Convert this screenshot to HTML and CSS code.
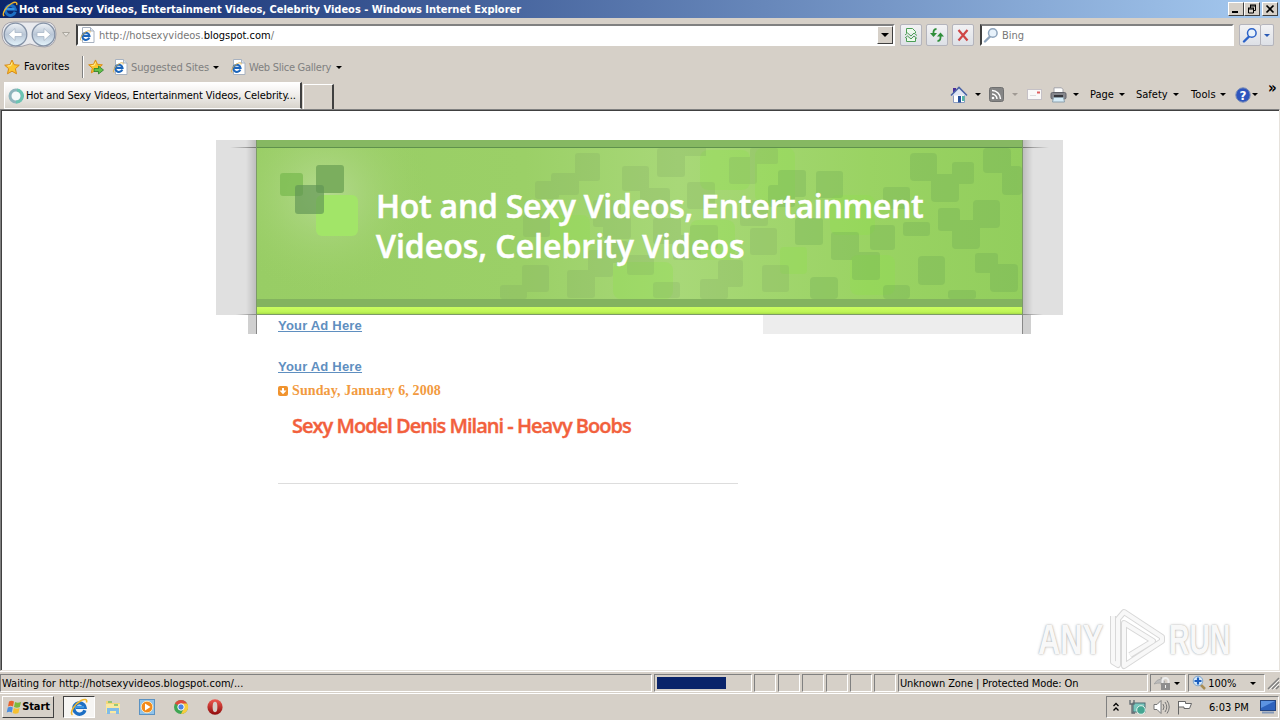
FILE: index.html
```html
<!DOCTYPE html>
<html lang="en">
<head>
  <meta charset="UTF-8" />
  <title>Hot and Sexy Videos, Entertainment Videos, Celebrity Videos</title>
  <link rel="stylesheet" href="styles.css">
</head>
<body>
  <!-- shared icons -->
  <svg class="defs" width="0" height="0">
    <defs>
      <linearGradient id="g-ball" x1="0" y1="0" x2="0" y2="1"><stop offset="0" stop-color="#eef2f6"/><stop offset=".5" stop-color="#b9c6d6"/><stop offset="1" stop-color="#e4f4fc"/></linearGradient>
      <linearGradient id="g-red" x1="0" y1="0" x2="0" y2="1"><stop offset="0" stop-color="#ef5a50"/><stop offset="1" stop-color="#8e0a0a"/></linearGradient>
      <symbol id="ie" viewBox="0 0 16 16">
        <path d="M13.2 10.8A5 5 0 1 1 13.3 8.300H5.2" fill="none" stroke="#1d6fc4" stroke-width="3"/>
        <path d="M4 8h8.500" stroke="#3e9be8" stroke-width="1.600"/>
        <path d="M2.200 15C-.6 13 4 5.500 9.500 2.500 13 .6 15.700.9 14.600 4" fill="none" stroke="#efb52c" stroke-width="1.400"/>
      </symbol>
      <symbol id="page-ie" viewBox="0 0 16 16">
        <path d="M3.500.5h8l3.500 3.500v11.500H3.500z" fill="#fff" stroke="#a8b2c0"/>
        <path d="M11.500.5v3.500H15" fill="#dde5ee" stroke="#a8b2c0"/>
        <path d="M10.300 10.600A3.600 3.600 0 1 1 10.500 8.900H4.500" fill="none" stroke="#1d66bb" stroke-width="2.100"/>
        <path d="M2 13.500C0 12 3.500 6.500 7.500 4.500c2.500-1.300 4.200-1 3.500 1" fill="none" stroke="#dfb04a"/>
      </symbol>
      <symbol id="star" viewBox="0 0 16 16">
        <path d="M8 1l2.100 4.700 5.200.5-3.900 3.500 1.100 5.100L8 12.200l-4.500 2.600 1.100-5.100L.7 6.200l5.200-.5z" fill="#fcc630" stroke="#d98a14"/>
        <path d="M8 3.500L6.800 6.600l-3.200.4" fill="none" stroke="#fff0a0"/>
      </symbol>
      <symbol id="glass" viewBox="0 0 16 16">
        <path d="M7 9.500L2 14.500" stroke="currentColor" stroke-width="2.400" stroke-linecap="round"/>
        <circle cx="9.800" cy="6" r="4.300" fill="#e8f2fb" stroke="currentColor" stroke-width="1.500"/>
      </symbol>
    </defs>
  </svg>

  <header class="titlebar">
    <svg class="ic16"><use href="#ie"/></svg>
    <span class="caption">Hot and Sexy Videos, Entertainment Videos, Celebrity Videos - Windows Internet Explorer</span>
    <div class="winbtns">
      <button><svg viewBox="0 0 14 12"><path d="M3 9h6" stroke="#000" stroke-width="2"/></svg></button>
      <button><svg viewBox="0 0 14 12"><path d="M5 2h6M5 3h6M3 5h6M3 6h6" stroke="#000"/><path d="M5.500 2v3M10.500 2v5.500H9M3.500 5v5h5V5" fill="none" stroke="#000"/></svg></button>
      <button class="close"><svg viewBox="0 0 14 12"><path d="M3.500 2.500l7 7M10.500 2.500l-7 7" stroke="#000" stroke-width="1.700"/></svg></button>
    </div>
  </header>

  <div class="navrow">
    <svg class="travel" viewBox="0 0 74 30">
      <path d="M14 2h32q10 0 10 12t-11 13q-8 0-15-3-8 3-16 3Q2 26 2 14T14 2z" fill="#e9eaee" stroke="#a5a3aa"/>
      <circle cx="15.500" cy="14.500" r="11.300" fill="url(#g-ball)" stroke="#8492a6" stroke-width="1.300"/>
      <circle cx="43.500" cy="14.500" r="11.300" fill="url(#g-ball)" stroke="#8492a6" stroke-width="1.300"/>
      <path d="M8.500 14.500l6.500-6v4h7v4h-7v4z" fill="#fff" stroke="#aab7c8" stroke-width=".8"/>
      <path d="M50.500 14.500l-6.500-6v4h-7v4h7v4z" fill="#fff" stroke="#aab7c8" stroke-width=".8"/>
      <path d="M62.500 12.500h7l-3.500 4z" fill="#e8e5e0" stroke="#aaa69e"/>
    </svg>
    <div class="address">
      <svg class="ic16"><use href="#page-ie"/></svg>
      <span class="url">http://hotsexyvideos.<b>blogspot.com</b>/</span>
      <button class="drop"><i class="arr big"></i></button>
    </div>
    <div class="navbtns">
      <button><svg viewBox="0 0 16 16"><path d="M3.500 6V1.500h6l3 3V6M3.500 11v3.500h9V11" fill="#eefaee" stroke="#4b9e55"/><path d="M2 8l2.500-2L8 9l3-3 3 2.500M2 11l2.500-2L8 12l3-3 3 2.500" fill="none" stroke="#4b9e55"/></svg></button>
      <button><svg viewBox="0 0 16 16"><path d="M7.500 2Q4 2 4.500 7" fill="none" stroke="#2f8e3a" stroke-width="1.800"/><path d="M1 6h7L4.500 10z" fill="#2f8e3a"/><path d="M8.500 14Q12 14 11.500 9" fill="none" stroke="#2f8e3a" stroke-width="1.800"/><path d="M8 9.500h7L11.500 5.500z" fill="#2f8e3a"/></svg></button>
      <button><svg viewBox="0 0 16 16"><path d="M3.500 3l9 10.500M12.500 3l-9 10.500" stroke="#cf4545" stroke-width="2.200"/></svg></button>
    </div>
    <div class="search">
      <svg class="ic16"><use href="#glass"/></svg>
      <span>Bing</span>
    </div>
    <div class="go">
      <button><svg class="ic16"><use href="#glass"/></svg></button>
      <button class="more"><i class="arr blue"></i></button>
    </div>
  </div>

  <div class="favrow">
    <svg class="ic16"><use href="#star"/></svg>
    <span class="favs">Favorites</span>
    <span class="sep"></span>
    <svg class="ic16 add" viewBox="0 0 16 16"><use href="#star" width="15" height="15"/><path d="M6 9.500h4.500V7l5 4-5 4v-2.500H6z" fill="#62c04a" stroke="#2a7f2a" stroke-width=".8"/></svg>
    <svg class="ic16 sug"><use href="#page-ie"/></svg>
    <span class="dim suggested">Suggested Sites</span><i class="arr"></i>
    <svg class="ic16 web"><use href="#page-ie"/></svg>
    <span class="dim slice">Web Slice Gallery</span><i class="arr"></i>
  </div>

  <div class="tabrow">
    <div class="tab">
      <svg class="ic16" viewBox="0 0 16 16"><circle cx="8" cy="8" r="6" fill="#f5fafa" stroke="#8fb4bc" stroke-width="3"/><path d="M9 2A6 6 0 0 1 8 14" fill="none" stroke="#6cc4b2" stroke-width="3"/></svg>
      <span>Hot and Sexy Videos, Entertainment Videos, Celebrity...</span>
    </div>
    <div class="newtab"></div>
    <div class="cmdbar">
      <svg class="ic18" viewBox="0 0 18 18"><path d="M3.500 8.500v8h11v-8" fill="#fff" stroke="#8a9bc0"/><path d="M3 2h3v5H3z" fill="#4a2f9a"/><path d="M1 9.500l8-8 8 8" fill="#dfe6f3" stroke="#4a63a6" stroke-width="1.600"/><path d="M8 10h3v6.500H8z" fill="#27519c"/><path d="M12 10h2.500v5H12z" fill="#51b5a5"/></svg>
      <i class="arr a1"></i>
      <svg class="rss" viewBox="0 0 15 15"><rect x=".5" y=".5" width="14" height="14" rx="2" fill="#858585" stroke="#707070"/><circle cx="4" cy="11" r="1.300" fill="#fff"/><path d="M3 7a5 5 0 0 1 5 5M3 3.500A8.500 8.500 0 0 1 11.500 12" fill="none" stroke="#fff" stroke-width="1.500"/></svg>
      <i class="arr pale a2"></i>
      <svg class="mail" viewBox="0 0 15 11"><rect x=".5" y=".5" width="14" height="10" fill="#faf9f8" stroke="#c5c1c6"/><path d="M10 2.500h3v2h-3z" fill="#e06060"/><path d="M3 6.500h6" stroke="#ddd"/></svg>
      <svg class="print" viewBox="0 0 17 16"><path d="M4 6V.8h7.500L13 2.500V6" fill="#fff" stroke="#a2a2a8"/><rect x="1" y="5.500" width="15" height="6.500" rx="1.500" fill="#85868c" stroke="#606168"/><path d="M4 8h9v2H4z" fill="#35363b"/><path d="M3.500 10.500h10l1 4.500h-12z" fill="#d5ecf8" stroke="#8ca0ac"/></svg>
      <i class="arr a3"></i>
      <span class="m1">Page</span><i class="arr"></i>
      <span class="m2">Safety</span><i class="arr"></i>
      <span class="m3">Tools</span><i class="arr"></i>
      <svg class="ic16 help" viewBox="0 0 16 16"><circle cx="8" cy="8" r="7.200" fill="#2e55bd" stroke="#7b8eb9"/><text x="8" y="12.500" text-anchor="middle">?</text></svg><i class="arr nogap"></i>
      <span class="chev">»</span>
    </div>
  </div>

  <main class="viewport">
    <div class="blog">
      <div class="head">
        <div class="wing left"></div>
        <div class="banner">
          <svg class="art" viewBox="257 148 765 151" preserveAspectRatio="none">
            <defs>
              <radialGradient id="glow"><stop offset="0" stop-color="#b5da90"/><stop offset="1" stop-color="#9ccf66" stop-opacity="0"/></radialGradient>
              <linearGradient id="wash"><stop offset="0" stop-color="#98cd65"/><stop offset=".35" stop-color="#9bd067"/><stop offset=".55" stop-color="#a8d878"/><stop offset=".8" stop-color="#9ad363"/><stop offset="1" stop-color="#92ce5d"/></linearGradient>
            </defs>
            <rect x="257" y="148" width="765" height="151" fill="url(#wash)"/>
            <ellipse cx="325" cy="194" rx="105" ry="100" fill="url(#glow)"/>
            <g fill="#8fe24c" opacity=".3">
              <rect x="700" y="150" width="50" height="40" rx="8"/><rect x="755" y="148" width="40" height="55" rx="8"/>
              <rect x="613" y="262" width="60" height="37" rx="8"/><rect x="690" y="220" width="45" height="40" rx="8"/>
              <rect x="830" y="195" width="45" height="40" rx="8"/><rect x="850" y="255" width="45" height="40" rx="8"/>
              <rect x="780" y="247" width="27" height="27" rx="4"/><rect x="550" y="215" width="40" height="35" rx="8"/>
            </g>
            <!-- left side fades out, right side is stronger -->
            <g fill="#7a9f62" opacity=".2">
              <rect x="575" y="153" width="25" height="28" rx="3"/><rect x="551" y="173" width="28" height="22" rx="3"/>
              <rect x="622" y="166" width="27" height="25" rx="3"/><rect x="657" y="148" width="28" height="29" rx="3"/>
              <rect x="687" y="182" width="28" height="27" rx="3"/><rect x="729" y="157" width="28" height="27" rx="3"/>
              <rect x="750" y="148" width="28" height="16" rx="2"/><rect x="680" y="148" width="26" height="8"/>
              <rect x="523" y="215" width="27" height="22" rx="3"/><rect x="593" y="200" width="28" height="27" rx="3"/>
              <rect x="653" y="218" width="28" height="26" rx="3"/><rect x="588" y="250" width="25" height="27" rx="3"/>
              <rect x="567" y="270" width="28" height="28" rx="3"/><rect x="522" y="265" width="27" height="27" rx="3"/>
              <rect x="500" y="285" width="27" height="14" rx="3"/><rect x="627" y="255" width="27" height="20" rx="3"/>
              <rect x="653" y="282" width="27" height="16" rx="3"/><rect x="673" y="235" width="28" height="25" rx="3"/>
              <rect x="718" y="260" width="25" height="27" rx="3"/><rect x="700" y="279" width="28" height="20" rx="3"/>
              <rect x="762" y="265" width="27" height="27" rx="3"/><rect x="750" y="228" width="27" height="27" rx="3"/>
              <rect x="535" y="181" width="24" height="18" rx="3"/><rect x="603" y="215" width="28" height="24" rx="3"/>
              <rect x="640" y="188" width="30" height="26" rx="3"/><rect x="740" y="200" width="28" height="26" rx="3"/>
              <rect x="690" y="225" width="28" height="24" rx="3"/><rect x="602" y="241" width="26" height="22" rx="3"/>
            </g>
            <g fill="#649f52" opacity=".24">
              <rect x="778" y="170" width="28" height="27" rx="3"/><rect x="816" y="171" width="27" height="27" rx="3"/>
              <rect x="768" y="185" width="27" height="22" rx="3"/><rect x="795" y="218" width="28" height="27" rx="3"/>
              <rect x="831" y="232" width="28" height="28" rx="3"/><rect x="852" y="252" width="28" height="28" rx="3"/>
              <rect x="870" y="225" width="25" height="25" rx="3"/><rect x="903" y="222" width="27" height="14" rx="3"/>
              <rect x="883" y="187" width="27" height="22" rx="3"/><rect x="910" y="153" width="27" height="28" rx="4"/>
              <rect x="931" y="174" width="28" height="28" rx="4"/><rect x="952" y="162" width="22" height="22" rx="3"/>
              <rect x="983" y="148" width="28" height="25" rx="4"/><rect x="1002" y="166" width="20" height="29" rx="4"/>
              <rect x="973" y="200" width="27" height="28" rx="4"/><rect x="938" y="208" width="22" height="23" rx="3"/>
              <rect x="952" y="220" width="28" height="29" rx="4"/><rect x="918" y="256" width="27" height="29" rx="4"/>
              <rect x="975" y="253" width="23" height="20" rx="3"/><rect x="990" y="264" width="28" height="28" rx="4"/>
              <rect x="948" y="290" width="28" height="9" rx="3"/><rect x="883" y="285" width="27" height="14" rx="4"/>
              <rect x="810" y="277" width="28" height="22" rx="4"/>
            </g>
            <rect x="316" y="195" width="42" height="41" rx="6" fill="#a2e568"/>
            <rect x="280" y="173" width="23" height="23" rx="3" fill="#7fbd55" opacity=".85"/>
            <rect x="316" y="165" width="28" height="28" rx="3" fill="#7bae5e"/>
            <rect x="295" y="185" width="29" height="29" rx="3" fill="#5f9354" opacity=".65"/>
          </svg>
          <h1><span>Hot and Sexy Videos, Entertainment</span><br>Videos, Celebrity Videos</h1>
        </div>
        <div class="wing right"></div>
      </div>
      <div class="body">
        <div class="posts">
          <a href="#">Your Ad Here</a>
          <a href="#" class="second">Your Ad Here</a>
          <h2><svg viewBox="0 0 10 10"><rect width="10" height="10" rx="2" fill="#f0932e"/><path d="M4 2h2v2.500h2.500L5 8.300 1.500 4.500H4z" fill="#fff"/></svg>Sunday, January 6, 2008</h2>
          <h3>Sexy Model Denis Milani - Heavy Boobs</h3>
          <hr>
        </div>
        <div class="sidebar"></div>
      </div>
    </div>
    <div class="watermark">
      <span class="any">ANY</span>
      <svg viewBox="0 0 60 64"><path d="M6 9v46l5 3V12l6-7 38 25v4L17 59V16l29 18-23 14" fill="none" stroke="#d8d8d8" stroke-width="6" stroke-linejoin="round"/><path d="M6 9v46l5 3V12l6-7 38 25v4L17 59V16l29 18-23 14" fill="none" stroke="#f8f8f8" stroke-width="4" stroke-linejoin="round"/></svg>
      <span class="run">RUN</span>
    </div>
  </main>

  <div class="status">
    <div class="pane msg"><span>Waiting for http://hotsexyvideos.blogspot.com/...</span></div>
    <div class="pane progress"><div></div></div>
    <div class="pane slot"></div><div class="pane slot"></div><div class="pane slot"></div>
    <div class="pane slot"></div><div class="pane slot"></div><div class="pane slot"></div>
    <div class="pane zone"><span>Unknown Zone | Protected Mode: On</span></div>
    <div class="pane lock">
      <svg viewBox="0 0 20 16"><path d="M1 9q3-5 7-5v-2l4 5-4 3V8Q4 8 1 9z" fill="#bbb" stroke="#999" stroke-width=".6"/><path d="M9.500 8V6a3 3 0 0 1 6 0v2" fill="none" stroke="#eee" stroke-width="2"/><rect x="8" y="8" width="9" height="7" fill="#8e8e8e"/><path d="M12.500 10v3" stroke="#eee"/></svg>
      <i class="arr"></i>
    </div>
    <div class="pane zoom">
      <svg viewBox="0 0 16 16"><path d="M8 9l5 5" stroke="#a88d56" stroke-width="2.500"/><circle cx="6" cy="6" r="4.800" fill="#d8ebfa" stroke="#7ea4cc"/><path d="M6 2.500v7M2.500 6h7" stroke="#1d5fc0" stroke-width="2.200"/></svg>
      <span>100%</span><i class="arr"></i>
    </div>
    <svg class="grip" viewBox="0 0 14 14"><path d="M2 13L13 2M6 13l7-7M10 13l3-3" stroke="#808080" stroke-width="1.500"/><path d="M3.500 13.500l10-10M7.500 13.500l6-6" stroke="#fff" stroke-width=".8"/></svg>
  </div>

  <footer class="taskbar">
    <button class="start">
      <svg viewBox="0 0 16 16"><path d="M3 2.500Q5.500 1 8 2.500L7 7.500Q4.500 6 2 7.500z" fill="#e8622c"/><path d="M9 3q2.500 1.500 6 0l-1.200 5Q11 9.300 8 8z" fill="#7db93c"/><path d="M1.800 8.500Q4.500 7 6.800 8.500l-1 5Q3.500 12 .7 13.500z" fill="#4b8ede"/><path d="M7.800 9q3 1.500 5.800 0l-1.200 5Q9.500 15.500 6.700 14z" fill="#f6c030"/></svg>
      <span>Start</span>
    </button>
    <div class="task active"><svg viewBox="0 0 16 16"><use href="#ie"/></svg></div>
    <div class="task"><svg viewBox="0 0 18 18"><path d="M2 3h5l1 2h8v4H2z" fill="#f4d67a"/><path d="M2 6h14v9H2z" fill="#f9e9a0"/><path d="M4 4h4M10 7h4" stroke="#76bd6c" stroke-width="1.500"/><path d="M3 16V10h12v6h-3v-3H6v3z" fill="#80bce8"/></svg></div>
    <div class="task"><svg viewBox="0 0 18 18"><rect x="1.500" y="1.500" width="15" height="15" fill="#90c3ea" stroke="#5b92c2"/><circle cx="9" cy="9" r="5.800" fill="#f28a1a" stroke="#fde3b6"/><path d="M7 5.500L12.500 9 7 12.500z" fill="#fff"/></svg></div>
    <div class="task"><svg viewBox="0 0 18 18"><circle cx="9" cy="9" r="7" fill="#3fa653"/><path d="M9 9L2.900 5.500A7 7 0 0 1 15.100 5.500z" fill="#dd4b3d"/><path d="M9 5.500h6.200A7 7 0 0 1 9 16l3-6z" fill="#f8cd3e"/><circle cx="9" cy="9" r="3.200" fill="#4a84e4" stroke="#fff"/></svg></div>
    <div class="task"><svg viewBox="0 0 18 18"><ellipse cx="9" cy="9" rx="7.600" ry="7.800" fill="url(#g-red)"/><ellipse cx="9" cy="9" rx="2.400" ry="5.200" fill="#d6cfc8"/></svg></div>
    <div class="tray">
      <svg class="up" viewBox="0 0 8 10"><path d="M1.500 4L4 1.500 6.500 4M1.500 8.500L4 6l2.500 2.500" fill="none" stroke="#000" stroke-width="1.300"/></svg>
      <svg class="net" viewBox="0 0 18 16"><rect x="4" y="4" width="12" height="9" fill="#79c7bd" stroke="#4b6a72"/><path d="M1 1v4h4V1M3 5v9h3" fill="none" stroke="#606a70" stroke-width="1.300"/><circle cx="12" cy="11" r="4.300" fill="#45a692" stroke="#e2f0ea"/></svg>
      <svg class="vol" viewBox="0 0 17 16"><path d="M1 5.500h3L8 1.500v13l-4-4H1z" fill="#fff" stroke="#777"/><path d="M10 5q2 3 0 6M12 3q3.500 5 0 10M14 1.500q4.500 6.500 0 13" fill="none" stroke="#777"/></svg>
      <svg class="flag" viewBox="0 0 17 16"><path d="M2.500 15.500V2M2.500 2.500h7v2h6l-2 5H8v-1.500H2.500" fill="#fff" stroke="#666"/></svg>
      <span class="clock">6:03 PM</span>
      <svg class="desk" viewBox="0 0 16 14"><rect x=".5" y=".5" width="15" height="10" fill="#2d62bd" stroke="#244580"/><path d="M1 1h14L1 8z" fill="#5c93e2"/><path d="M2 12.500h12" stroke="#8398b8" stroke-width="2"/></svg>
    </div>
  </footer>
</body>
</html>
```
FILE: styles.css
```css
:root {
  --face: #d6d0c8;
  --shadow: #808080;
  --dark: #404040;
}
* { box-sizing: border-box; }
html, body { height: 100%; }
body {
  margin: 0;
  display: flex;
  flex-direction: column;
  overflow: hidden;
  background: var(--face);
  color: #000;
  font: 11px/14px "DejaVu Sans Condensed", "DejaVu Sans", sans-serif;
  font-stretch: condensed;
  white-space: nowrap;
}
svg { display: block; flex: none; }
span { flex: none; }
button { font: inherit; color: inherit; padding: 0; margin: 0; border: 0; display: flex; align-items: center; justify-content: center; }
.defs { position: absolute; }
.ic16 { width: 16px; height: 16px; }
.ic18 { width: 18px; height: 18px; }
.arr {
  flex: none;
  width: 0; height: 0;
  border: 3px solid transparent;
  border-top-color: #000;
  border-bottom: 0;
  margin-left: 5px;
}
.arr.big { border-width: 4px 4px 0; margin: 0; }
.arr.blue { border-top-color: #2a5ab5; margin: 0; }
.arr.pale { border-top-color: #a09a94; }
.arr.nogap { margin-left: 1px; }

/* title bar */
.titlebar {
  height: 18px;
  flex: none;
  display: flex;
  align-items: center;
  padding-left: 2px;
  background: linear-gradient(90deg, #0a246a, #a6caf0);
}
.caption { color: #fff; font-weight: bold; margin-left: 1px; padding-top: 1px; letter-spacing: -.01px; }
.winbtns { display: flex; margin-left: auto; padding-right: 2px; }
.winbtns button {
  width: 16px; height: 14px;
  background: var(--face);
  border: 1px solid;
  border-color: #fff var(--dark) var(--dark) #fff;
}
.winbtns svg { width: 14px; height: 12px; }
.winbtns .close { margin-left: 2px; }

/* address row */
.navrow { height: 34px; flex: none; display: flex; align-items: flex-start; padding-top: 2px; }
.travel { width: 74px; height: 30px; }
.address {
  display: flex;
  align-items: center;
  width: 819px; height: 22px;
  margin: 4px 0 0 2px;
  padding-left: 1px;
  background: #fff;
  border: 2px solid;
  border-color: var(--shadow) #fff #fff var(--dark);
}
.url { margin-left: 4px; padding-top: 2px; color: #777; }
.url b { color: #000; font-weight: normal; }
.drop {
  width: 16px; height: 18px;
  margin-left: auto;
  background: var(--face);
  border: 1px solid;
  border-color: #fff var(--dark) var(--dark) #fff;
}
.navbtns { display: flex; gap: 4px; margin: 4px 0 0 5px; }
.navbtns button, .go button {
  width: 22px; height: 22px;
  background: linear-gradient(#f2f2f4, #dde0e6);
  border: 1px solid #b4b4bc;
  border-radius: 2px;
}
.navbtns svg { width: 16px; height: 16px; }
.search {
  display: flex;
  align-items: center;
  width: 254px; height: 22px;
  margin: 4px 0 0 6px;
  padding-left: 1px;
  color: #777;
  background: #fff;
  border: 2px solid;
  border-color: var(--shadow) #fff #fff var(--dark);
}
.search .ic16 { color: #8fa5bd; }
.search span { margin-left: 3px; padding-top: 2px; }
.go { display: flex; margin: 4px 0 0 5px; color: #2b62c8; }
.go button.more { width: 13px; border-left: 0; }

/* favorites bar */
.favrow { height: 30px; flex: none; display: flex; align-items: center; padding-left: 4px; }
.favs { margin-left: 4px; width: 46px; letter-spacing: .1px; }
.sep { width: 2px; height: 22px; margin: 0 4px 0 12px; border-left: 1px solid var(--shadow); border-right: 1px solid #fff; }
.sug { margin-left: 8px; }
.web { margin-left: 11px; }
.dim { color: #808080; padding-top: 1px; }
.suggested { width: 78px; margin-left: 3px; letter-spacing: -.12px; }
.slice { width: 82px; margin-left: 3px; letter-spacing: -.25px; }
.favrow .slice + .arr { margin-left: 5px; }
.favrow .suggested + .arr { margin-left: 4px; }

/* tabs + command bar */
.tabrow { height: 27px; flex: none; display: flex; align-items: flex-end; padding-left: 4px; }
.tab {
  display: flex;
  align-items: center;
  width: 298px; height: 27px;
  padding-left: 3px;
  background: linear-gradient(#fff, #f2f0ee 40%, #d8d4cc);
  border: 1px solid #fff;
  border-right: 2px solid var(--dark);
}
.tab span { margin-left: 2px; padding-top: 1px; letter-spacing: -.09px; }
.newtab { width: 31px; height: 25px; margin-left: 1px; border: 1px solid #fff; border-right: 2px solid var(--dark); border-bottom: 0; }
.cmdbar { display: flex; align-items: center; height: 27px; margin-left: 616px; padding-bottom: 2px; }
.rss { width: 15px; height: 15px; margin-left: 8px; }
.a2.arr { margin-left: 8px; }
.mail { width: 15px; height: 11px; margin-left: 9px; }
.print { width: 17px; height: 16px; margin-left: 8px; }
.a1.arr { margin-left: 7px; }
.a3.arr { margin-left: 6px; }
.m1 { margin-left: 11px; width: 24px; }
.m2 { margin-left: 11px; width: 32px; }
.m3 { margin-left: 12px; width: 25px; letter-spacing: .1px; }
.m3 + .arr { margin-left: 4px; }
.help { margin-left: 9px; }
.help text { fill: #fff; font: bold 12px "DejaVu Sans", sans-serif; }
.chev { margin: -14px 0 0 10px; font-size: 15px; font-weight: bold; }

/* page */
.viewport {
  position: relative;
  flex: 1;
  min-height: 0;
  background: #fff;
  border: 1px solid;
  border-color: var(--shadow) #e6e2dc #e6e2dc var(--shadow);
  box-shadow: inset 1px 1px var(--dark);
}
.blog { width: 847px; margin: 30px 0 0 215px; }
.head { display: flex; height: 175px; }
.wing { width: 40px; background: linear-gradient(90deg, transparent 75%, #bdbdbd), #e0e0e0; padding-top: 7px; }
.wing.right { background: linear-gradient(270deg, transparent 75%, #bdbdbd), #e0e0e0; margin-left: auto; }
.wing::before { content: ""; display: block; height: 1px; margin-left: 14px; background: linear-gradient(90deg, transparent, #777); }
.wing.right::before { margin: 0 14px 0 0; background: linear-gradient(270deg, transparent, #777); }
.wing::after { content: ""; display: block; height: 1px; margin: 166px 0 0 20px; background: linear-gradient(90deg, transparent, #888); }
.wing.right::after { margin: 166px 20px 0 0; background: linear-gradient(270deg, transparent, #888); }
.banner {
  position: relative;
  width: 767px;
  border: 1px solid #7c9a68;
  border-width: 0 1px 1px;
  background: linear-gradient(#86b862 0 7px, #5f914c 7px 8px, transparent 8px 159px, #83b35f 159px 167px, #c9fb5e 167px 168px, #bdf455 172px, #a7dc46 174px);
}
.art { position: absolute; left: 0; top: 8px; width: 765px; height: 151px; }
h1 {
  position: relative;
  margin: 46px 0 0 119px;
  color: #fff;
  font: 600 32px/40px "Open Sans", sans-serif;
  -webkit-text-stroke: .5px #fff;
}
h1 span { letter-spacing: -.24px; }
.body { display: flex; width: 783px; height: 19px; margin-left: 32px; border: solid #d0d0d0; border-width: 0 8px; }
.posts { width: 506px; flex: none; padding: 3px 0 0 21px; border-left: 1px solid #888; height: 19px; }
.posts a { display: block; width: 84px; color: #5f8fc0; font: bold 13px/15px "Liberation Sans", sans-serif; letter-spacing: .2px; }
.posts .second { margin-top: 26px; }
h2 { display: flex; align-items: center; margin: 8px 0 0; color: #f29a40; font: bold 14px/17px "Liberation Serif", serif; letter-spacing: .1px; }
h2 svg { width: 10px; height: 10px; margin-right: 4px; }
h3 { margin: 13px 0 0 14px; color: #f2603c; font: 600 20px/28px "Open Sans", sans-serif; letter-spacing: -.98px; -webkit-text-stroke: .4px #f2603c; }
hr { width: 460px; margin: 43px 0 0; border: 0; border-top: 1px solid #ddd; }
.sidebar { flex: 1; margin-left: 1px; background: #ededed; border-right: 1px solid #888; }
.watermark { position: absolute; right: 48px; bottom: -1px; display: flex; align-items: center; color: #f8f8f8; text-shadow: 0 0 3px #aaa, 0 0 1px #ccc; }
.watermark svg { width: 60px; height: 64px; margin: 0 2px 0 4px; }
.watermark span { font: bold 43px/50px "Liberation Sans", sans-serif; transform-origin: left; }
.any { width: 65px; transform: scaleX(.72); }
.run { width: 62px; transform: scaleX(.66); }

/* status bar */
.status { height: 22px; flex: none; display: flex; align-items: center; border-top: 1px solid #fff; padding-top: 1px; }
.pane {
  display: flex;
  align-items: center;
  height: 18px;
  margin-right: 2px;
  border: 1px solid;
  border-color: var(--shadow) #fff #fff var(--shadow);
}
.pane span { padding-top: 1px; }
.msg { width: 654px; }
.msg span { padding-left: 1px; }
.progress { width: 98px; padding-left: 2px; }
.progress div { width: 69px; height: 12px; background: #0a246a; }
.slot { width: 22px; }
.zone { width: 251px; padding-left: 1px; letter-spacing: -.1px; }
.lock { width: 36px; padding-left: 2px; }
.lock svg { width: 20px; height: 16px; }
.lock .arr { margin-left: 1px; }
.zoom { width: 77px; padding-left: 3px; }
.zoom svg { width: 16px; height: 16px; }
.zoom .arr { margin-left: 14px; }
.grip { width: 14px; height: 14px; margin-left: -1px; }

/* taskbar */
.taskbar { height: 27px; flex: none; display: flex; align-items: center; border-top: 1px solid #fff; padding-left: 2px; }
.start {
  width: 52px; height: 22px;
  background: var(--face);
  border: 1px solid;
  border-color: #fff var(--dark) var(--dark) #fff;
  font-weight: bold;
  letter-spacing: -.1px;
}
.start svg { width: 16px; height: 16px; }
.task { width: 34px; height: 22px; display: flex; align-items: center; justify-content: center; }
.task svg { width: 18px; height: 18px; }
.task.active { width: 32px; margin: 0 1px 0 9px; background: #f6f5f3; border: 1px solid; border-color: var(--dark) #fff #fff var(--dark); }
.tray {
  display: flex;
  align-items: center;
  width: 173px; height: 22px;
  margin: 0 1px 0 auto;
  padding-left: 5px;
  border: 1px solid;
  border-color: var(--shadow) #fff #fff var(--shadow);
}
.up { width: 8px; height: 10px; }
.net { width: 18px; height: 16px; margin-left: 9px; }
.vol { width: 17px; height: 16px; margin-left: 6px; }
.flag { width: 17px; height: 16px; margin-left: 6px; }
.clock { width: 40px; margin-left: 16px; padding-top: 1px; }
.desk { width: 16px; height: 14px; margin-left: 11px; }
```
